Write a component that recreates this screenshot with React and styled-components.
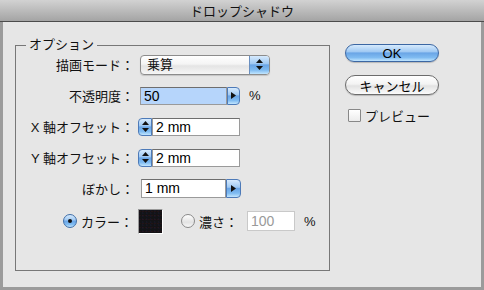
import React from 'react';
import styled, { createGlobalStyle, css } from 'styled-components';

const FONT = `"Liberation Sans", "Noto Sans CJK JP", sans-serif`;

const GlobalStyle = createGlobalStyle`
  html, body {
    margin: 0;
    padding: 0;
    background: #e6e6e6;
  }
  body {
    font-family: ${FONT};
    font-size: 13px;
    color: #111;
  }
`;

const aqua = css`
  background: linear-gradient(to bottom, #d6eafd 0%, #a0c9f3 42%, #6aa5e6 50%, #7fbbf1 78%, #c2e6ff 100%);
`;

const Window = styled.div`
  width: 484px;
  height: 290px;
  display: flex;
  flex-direction: column;
`;

const TitleBar = styled.div`
  height: 21px;
  flex: none;
  background: linear-gradient(to bottom, #d2d2d2, #a4a4a4);
  border-bottom: 1px solid #4c4c4c;
  display: flex;
  align-items: center;
  justify-content: center;
  font-size: 13px;
  color: #111;
`;

const Body = styled.div`
  flex: 1;
  display: flex;
  align-items: flex-start;
  border: 3px solid #9b9b9b;
  border-top: 0;
  background: #e6e6e6;
  padding: 16px 12px 0;
`;

const Group = styled.fieldset`
  margin: 0;
  padding: 0;
  width: 315px;
  height: 233px;
  box-sizing: border-box;
  border: 1px solid #777;
  min-width: 0;
`;

const Legend = styled.legend`
  margin-left: 10px;
  padding: 0 3px;
  font-size: 13px;
  line-height: 14px;
`;

const Rows = styled.div`
  display: grid;
  grid-template-columns: 118px 1fr;
  grid-auto-rows: 31px;
  column-gap: 6px;
  margin-top: -3px;
`;

const Label = styled.div`
  align-self: center;
  text-align: right;
  white-space: nowrap;
`;

const Control = styled.div`
  display: flex;
  align-items: center;
  margin-left: ${p => p.$shift || 0}px;
`;

const Select = styled.div`
  width: 130px;
  height: 20px;
  box-sizing: border-box;
  border: 1px solid #8c8c8c;
  border-radius: 4px;
  display: flex;
  overflow: hidden;
  background: linear-gradient(to bottom, #ffffff 0%, #f4f4f4 45%, #e4e4e4 55%, #f6f6f6 100%);
  box-shadow: 0 1px 1px rgba(0, 0, 0, 0.15);
`;

const SelectText = styled.span`
  flex: 1;
  padding-left: 6px;
  line-height: 18px;
`;

const SelectArrows = styled.span`
  width: 19px;
  display: flex;
  align-items: center;
  justify-content: center;
  border-left: 1px solid #6a8fbf;
  ${aqua}
`;

const Input = styled.div`
  width: ${p => p.$w}px;
  height: ${p => p.$h}px;
  box-sizing: border-box;
  border: 1px solid #9a9a9a;
  border-top-color: #6e6e6e;
  background: ${p => (p.$selected ? '#b6d5fb' : '#fff')};
  color: ${p => (p.$disabled ? '#9a9a9a' : '#000')};
  padding-left: 3px;
  font-size: 14px;
  line-height: ${p => p.$h - 2}px;
  ${p => p.$disabled && css`
    border-color: #c9c9c9;
  `}
`;

const StepButton = styled.span`
  width: ${p => p.$w}px;
  height: ${p => p.$h}px;
  box-sizing: border-box;
  border: 1px solid #4d7ab8;
  border-radius: ${p => (p.$left ? '4px 0 0 4px' : '0 4px 4px 0')};
  display: flex;
  align-items: center;
  justify-content: center;
  ${aqua}
`;

const Unit = styled.span`
  margin-left: ${p => p.$gap || 9}px;
`;

const RadioRow = styled.div`
  grid-column: 1 / -1;
  display: flex;
  align-items: center;
  padding-left: 47px;
  margin-top: 3px;
`;

const Radio = styled.span`
  width: 14px;
  height: 14px;
  box-sizing: border-box;
  border-radius: 50%;
  border: 1px solid ${p => (p.$on ? '#3f6ea8' : '#8a8a8a')};
  margin-left: ${p => p.$gap || 0}px;
  display: flex;
  align-items: center;
  justify-content: center;
  ${p => (p.$on
    ? aqua
    : css`background: linear-gradient(to bottom, #ffffff, #e2e2e2 60%, #f7f7f7);`)}
  &::after {
    content: '';
    width: 4px;
    height: 4px;
    border-radius: 50%;
    background: #111;
    display: ${p => (p.$on ? 'block' : 'none')};
  }
`;

const RadioText = styled.span`
  margin-left: 4px;
  white-space: nowrap;
`;

const Swatch = styled.span`
  width: 25px;
  height: 25px;
  box-sizing: border-box;
  margin-left: 5px;
  border: 1px solid #fff;
  border-top-color: #999;
  border-left-color: #999;
  background:
    radial-gradient(circle at 30% 40%, rgba(90, 20, 25, 0.22) 0 0.6px, transparent 1px) 0 0 / 3px 4px,
    radial-gradient(circle at 70% 70%, rgba(30, 35, 90, 0.22) 0 0.6px, transparent 1px) 1px 1px / 4px 3px,
    #131316;
`;

const Side = styled.div`
  margin-left: 15px;
  margin-top: 6px;
  width: 94px;
  display: flex;
  flex-direction: column;
`;

const PushButton = styled.div`
  height: ${p => (p.$primary ? 18 : 20)}px;
  box-sizing: border-box;
  border-radius: 10px;
  margin-top: ${p => p.$gap || 0}px;
  display: flex;
  align-items: center;
  justify-content: center;
  font-size: 13px;
  color: #000;
  ${p => (p.$primary
    ? css`
        border: 1px solid #3c67a3;
        ${aqua}
      `
    : css`
        border: 1px solid #6c6c6c;
        background: linear-gradient(to bottom, #ffffff 0%, #f3f3f3 45%, #e2e2e2 55%, #fbfbfb 100%);
      `)}
  box-shadow: 0 1px 1px rgba(0, 0, 0, 0.2);
`;

const CheckRow = styled.div`
  margin-top: 11px;
  padding-left: 3px;
  display: flex;
  align-items: center;
`;

const Checkbox = styled.span`
  width: 13px;
  height: 13px;
  box-sizing: border-box;
  border: 1px solid #888;
  border-radius: 1px;
  background: linear-gradient(to bottom, #ffffff, #ececec);
`;

const CheckText = styled.span`
  margin-left: 4px;
`;

const UpDown = () => (
  <svg width="7" height="11" viewBox="0 0 7 11">
    <polygon points="0,4 3.5,0 7,4" fill="#111" />
    <polygon points="0,7 3.5,11 7,7" fill="#111" />
  </svg>
);

const RightArrow = () => (
  <svg width="5" height="7" viewBox="0 0 5 7">
    <polygon points="0,0 5,3.5 0,7" fill="#111" />
  </svg>
);

export default function App() {
  return (
    <Window>
      <GlobalStyle />
      <TitleBar>ドロップシャドウ</TitleBar>
      <Body>
        <Group>
          <Legend>オプション</Legend>
          <Rows>
            <Label>描画モード：</Label>
            <Control>
              <Select>
                <SelectText>乗算</SelectText>
                <SelectArrows><UpDown /></SelectArrows>
              </Select>
            </Control>

            <Label>不透明度：</Label>
            <Control>
              <Input $w={87} $h={18} $selected>50</Input>
              <StepButton $w={13} $h={18}><RightArrow /></StepButton>
              <Unit>%</Unit>
            </Control>

            <Label>X 軸オフセット：</Label>
            <Control $shift={-2}>
              <StepButton $w={14} $h={18} $left><UpDown /></StepButton>
              <Input $w={88} $h={18}>2 mm</Input>
            </Control>

            <Label>Y 軸オフセット：</Label>
            <Control $shift={-2}>
              <StepButton $w={14} $h={18} $left><UpDown /></StepButton>
              <Input $w={88} $h={18}>2 mm</Input>
            </Control>

            <Label>ぼかし：</Label>
            <Control $shift={1}>
              <Input $w={85} $h={19}>1 mm</Input>
              <StepButton $w={15} $h={19}><RightArrow /></StepButton>
            </Control>

            <RadioRow>
              <Radio $on />
              <RadioText>カラー：</RadioText>
              <Swatch />
              <Radio $gap={18} />
              <RadioText>濃さ：</RadioText>
              <Unit $gap={9}>
                <Input $w={48} $h={20} $disabled>100</Input>
              </Unit>
              <Unit>%</Unit>
            </RadioRow>
          </Rows>
        </Group>

        <Side>
          <PushButton $primary>OK</PushButton>
          <PushButton $gap={13}>キャンセル</PushButton>
          <CheckRow>
            <Checkbox />
            <CheckText>プレビュー</CheckText>
          </CheckRow>
        </Side>
      </Body>
    </Window>
  );
}
